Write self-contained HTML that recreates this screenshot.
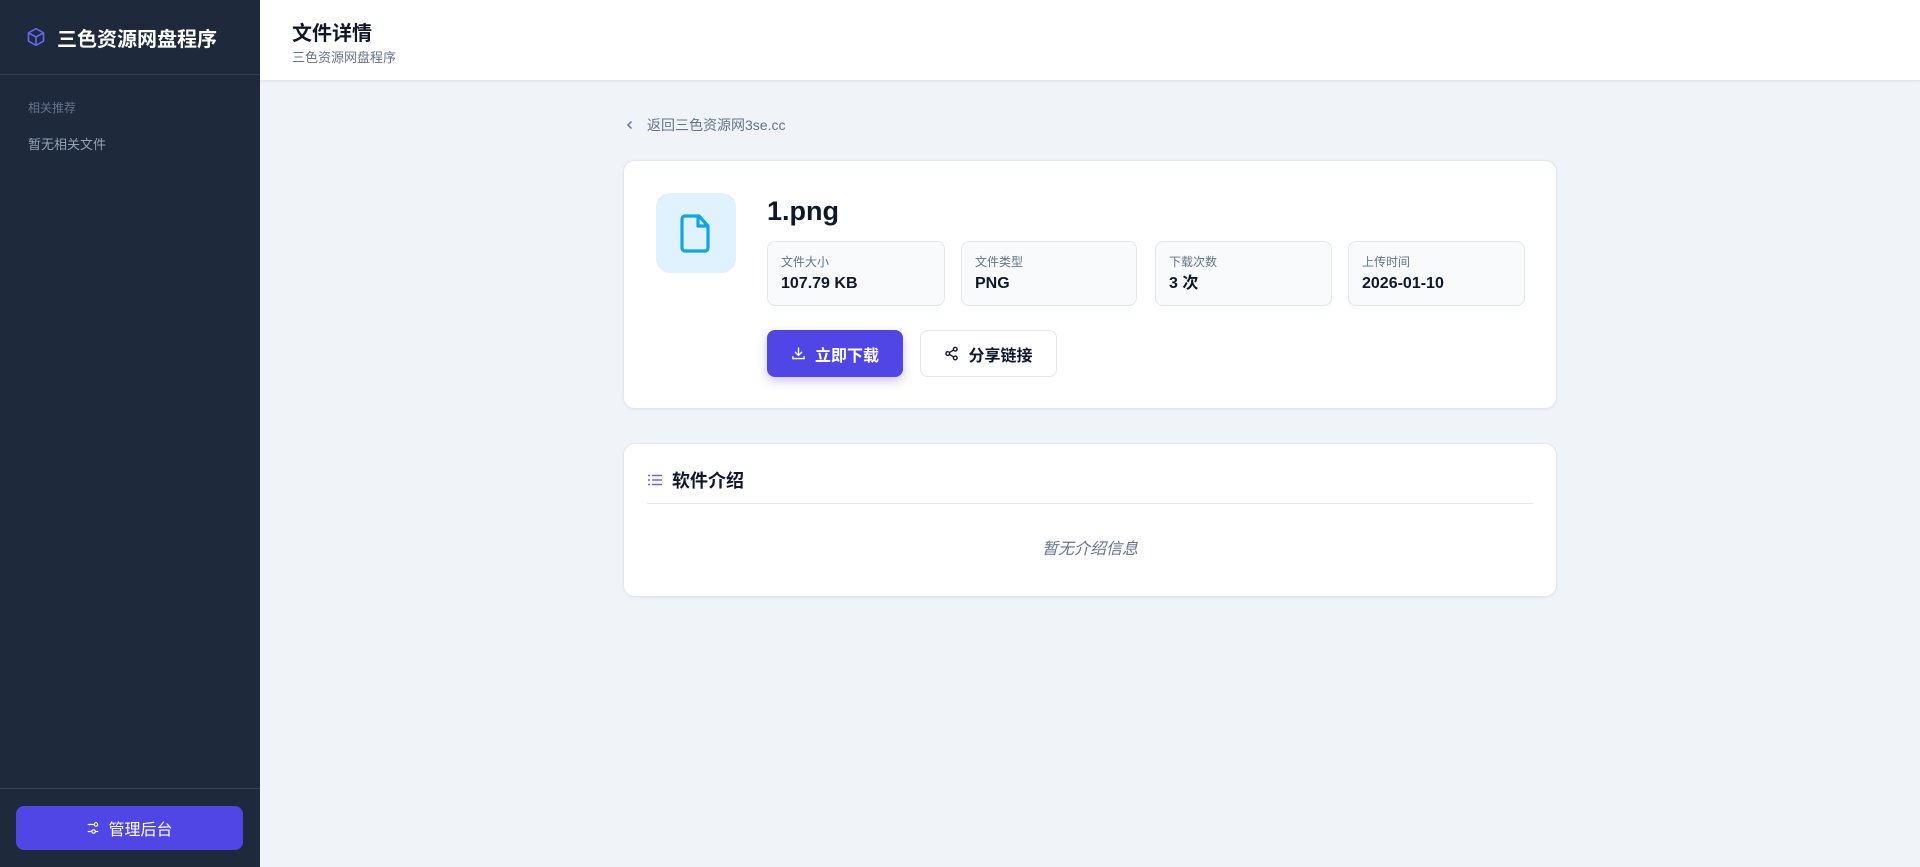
<!DOCTYPE html>
<html><head><meta charset="utf-8"><style>
*{box-sizing:border-box;margin:0;padding:0}
body{width:1920px;height:867px;overflow:hidden;background:#f0f4f8;font-family:"Liberation Sans","Noto Sans CJK SC",sans-serif;position:relative}
.side{position:absolute;left:0;top:0;width:260px;height:867px;background:#1e293b}
.brand{height:75px;border-bottom:1px solid #334155;display:flex;align-items:center;padding-left:26px;color:#fff;font-weight:700;font-size:20px}
.brand svg{margin-right:11px}
.s1{position:absolute;left:28px;top:99px;font-size:12px;color:#64748b}
.s2{position:absolute;left:28px;top:134px;font-size:13px;color:#94a3b8}
.sbot{position:absolute;left:0;bottom:0;width:260px;height:79px;border-top:1px solid #334155}
.adm{position:absolute;left:16px;top:17px;width:227px;height:44px;background:#4f46e5;border-radius:8px;color:#fff;font-size:16px;display:flex;align-items:center;justify-content:center}
.adm svg{margin-right:8px}
.hdr{position:absolute;left:260px;top:0;right:0;height:81px;background:#fff;border-bottom:1px solid #e2e8f0;box-shadow:0 1px 3px rgba(0,0,0,.05)}
.hdr h1{position:absolute;left:32px;top:17px;font-size:20px;font-weight:700;color:#0f172a}
.hdr p{position:absolute;left:32px;top:47px;font-size:13px;color:#64748b}
.back{position:absolute;left:625px;top:115px;font-size:14px;color:#64748b;display:flex;align-items:center}
.back svg{margin-right:12px}
.card{position:absolute;left:623px;width:934px;background:#fff;border:1px solid #e2e8f0;border-radius:12px;box-shadow:0 1px 3px rgba(0,0,0,.05)}
.ic{position:absolute;left:32px;top:32px;width:80px;height:80px;background:#e0f2fe;border-radius:14px;display:flex;align-items:center;justify-content:center}
.t{position:absolute;left:143px;top:35px;font-size:27px;font-weight:700;color:#0f172a}
.st{position:absolute;top:80px;height:65px;width:178px;background:#f8fafc;border:1px solid #e2e8f0;border-radius:8px;padding:12px 13px}
.st .l{font-size:12px;color:#64748b;line-height:16px}
.st .v{font-size:16px;font-weight:700;color:#0f172a;margin-top:4px;line-height:20px;height:20px}
.btn{position:absolute;top:169px;height:47px;border-radius:8px;display:flex;align-items:center;justify-content:center;font-size:16px;font-weight:700}
.b1{left:143px;width:136px;background:#4f46e5;color:#fff;box-shadow:0 4px 10px rgba(79,70,229,.3)}
.b2{left:296px;width:137px;background:#fff;border:1px solid #e2e8f0;color:#0f172a}
.btn svg{margin-right:9px}
</style></head><body>
<div class="side">
 <div class="brand"><svg width="20" height="20" viewBox="0 0 24 24" fill="none" stroke="#6366f1" stroke-width="2" stroke-linejoin="round"><path d="M12 2l9 5v10l-9 5-9-5V7z"/><path d="M3 7l9 5 9-5M12 12v10"/></svg>三色资源网盘程序</div>
 <div class="s1">相关推荐</div>
 <div class="s2">暂无相关文件</div>
 <div class="sbot"><div class="adm"><svg width="14" height="14" viewBox="0 0 24 24" fill="none" stroke="#fff" stroke-width="2"><path d="M3 6h10M3 18h6"/><circle cx="17" cy="6" r="3"/><circle cx="13" cy="18" r="3"/><path d="M16 18h5"/></svg>管理后台</div></div>
</div>
<div class="hdr"><h1>文件详情</h1><p>三色资源网盘程序</p></div>
<div class="back"><svg width="10" height="10" viewBox="0 0 10 10" fill="none" stroke="#64748b" stroke-width="1.5"><path d="M6.5 1.5L3 5l3.5 3.5"/></svg>返回三色资源网3se.cc</div>
<div class="card" style="top:160px;height:249px">
 <div class="ic"><svg width="34" height="40" viewBox="0 0 34 40" fill="none" stroke="#0ea5e9" stroke-width="3.2" stroke-linejoin="round"><path d="M6 3h14l9 10v22a3 3 0 0 1-3 3H6a3 3 0 0 1-3-3V6a3 3 0 0 1 3-3z"/><path d="M19 3v10h10"/></svg></div>
 <div class="t">1.png</div>
 <div class="st" style="left:143px"><div class="l">文件大小</div><div class="v">107.79 KB</div></div>
 <div class="st" style="left:337px;width:176px"><div class="l">文件类型</div><div class="v">PNG</div></div>
 <div class="st" style="left:531px;width:177px"><div class="l">下载次数</div><div class="v">3 次</div></div>
 <div class="st" style="left:724px;width:177px"><div class="l">上传时间</div><div class="v">2026-01-10</div></div>
 <div class="btn b1"><svg width="15" height="15" viewBox="0 0 24 24" fill="none" stroke="#fff" stroke-width="2.2" stroke-linecap="round"><path d="M12 3v12M7 10l5 5 5-5M3 17v3h18v-3"/></svg>立即下载</div>
 <div class="btn b2"><svg width="15" height="15" viewBox="0 0 24 24" fill="none" stroke="#0f172a" stroke-width="2.2"><circle cx="18" cy="5" r="3"/><circle cx="6" cy="12" r="3"/><circle cx="18" cy="19" r="3"/><path d="M8.6 13.5l6.8 4M15.4 6.5l-6.8 4"/></svg>分享链接</div>
</div>
<div class="card" style="top:443px;height:154px">
 <div style="position:absolute;left:24px;top:23px;display:flex;align-items:center;font-size:18px;font-weight:700;color:#0f172a"><svg width="14" height="12" viewBox="0 0 14 12" fill="none" stroke="#6366f1" stroke-width="1.5" style="margin-right:10px"><path d="M0 1.5h2M0 6h2M0 10.5h2M4 1.5h10M4 6h10M4 10.5h10"/></svg>软件介绍</div>
 <div style="position:absolute;left:23px;right:23px;top:59px;border-top:1px solid #e2e8f0"></div>
 <div style="position:absolute;left:0;right:0;top:91px;text-align:center;font-size:16px;font-style:italic;color:#64748b">暂无介绍信息</div>
</div>
</body></html>
